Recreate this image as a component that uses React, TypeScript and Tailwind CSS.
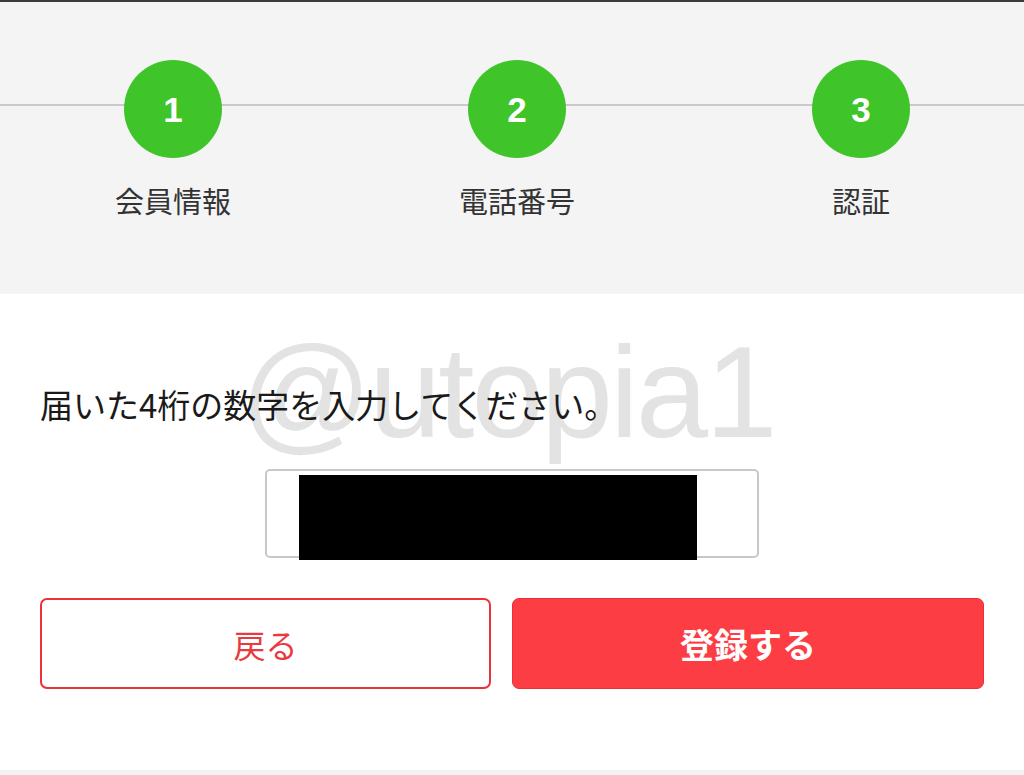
import React from "react";

const jp = { fontFamily: '"Noto Sans CJK JP", "Noto Sans", sans-serif' };

function Step({ n, label }: { n: string; label: string }) {
  return (
    <div className="flex flex-col items-center">
      <div
        className="w-[98px] h-[98px] rounded-full bg-[#3fc42a] flex items-center justify-center text-white text-[35px] font-bold leading-none"
        style={{ fontFamily: '"Liberation Sans", Arial, sans-serif' }}
      >
        {n}
      </div>
      <div className="mt-[22px] text-[29px] leading-[40px] text-[#333333]" style={jp}>
        {label}
      </div>
    </div>
  );
}

export default function App() {
  return (
    <div className="w-[1024px] h-[775px] bg-white overflow-hidden flex flex-col" style={jp}>
      <div className="h-[2px] bg-[#3a3a3a]" />
      <div className="relative h-[292px] bg-[#f4f4f4] overflow-hidden">
        <div className="absolute left-0 right-0 top-[102px] h-[2px] bg-[#c9c9c9]" />
        <div className="relative grid grid-cols-[344px_344px_344px] pl-[1px] pt-[58px]">
          <Step n="1" label="会員情報" />
          <Step n="2" label="電話番号" />
          <Step n="3" label="認証" />
        </div>
      </div>
      <div className="relative flex-1 flex flex-col">
        <div
          className="absolute left-[240px] top-[18px] text-[130px] leading-[160px] tracking-[-3px] text-[#e3e3e3] select-none"
          style={{ fontFamily: '"Liberation Sans", Arial, sans-serif' }}
        >
          @utopia1
        </div>
        <div className="relative pt-[87px] pl-[40px] text-[33px] leading-[46px] text-[#1a1a1a]">
          届いた4桁の数字を入力してください。
        </div>
        <div className="relative mt-[42px] ml-[265px] w-[494px] h-[89px] border-2 border-[#c8c8c8] rounded-[5px] bg-white">
          <div className="absolute left-[32px] top-[4px] w-[398px] h-[85px] bg-black" />
        </div>
        <div className="relative mt-[40px] flex gap-[21px] px-[40px]">
          <div className="w-[451px] h-[91px] border-2 border-[#ee3038] rounded-[7px] bg-white flex items-center justify-center text-[32px] text-[#e83a40]">
            戻る
          </div>
          <div className="w-[472px] h-[91px] bg-[#fc3e44] rounded-[7px] border border-[#ec2f35] flex items-center justify-center text-[34px] font-bold text-white">
            登録する
          </div>
        </div>
        <div className="mt-auto h-[5px] bg-[#f2f2f2]" />
      </div>
    </div>
  );
}
